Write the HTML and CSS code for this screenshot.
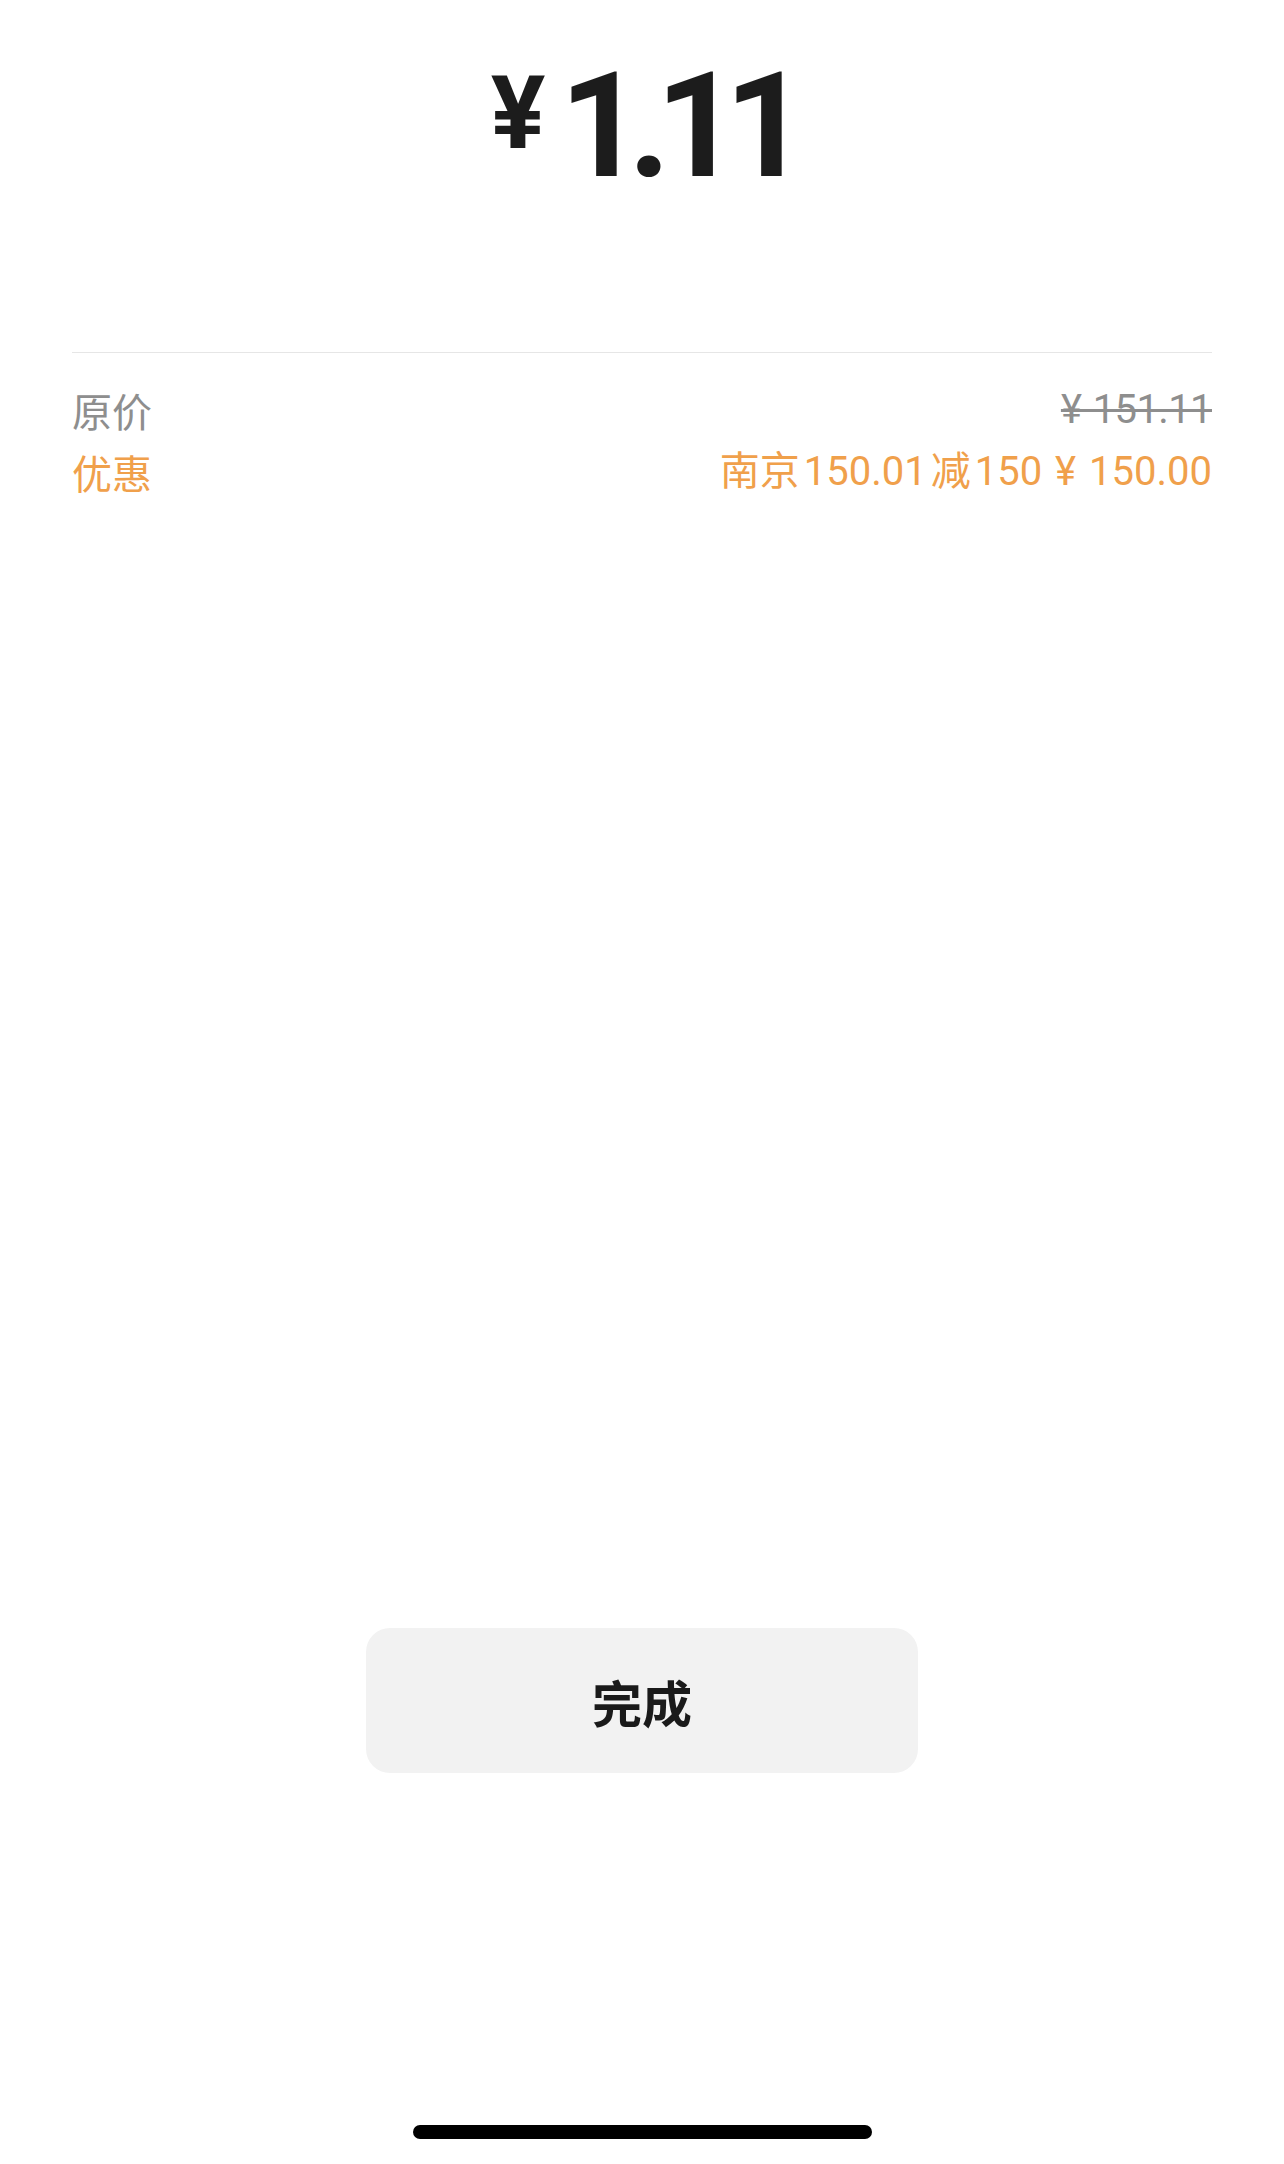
FILE: index.html
```html
<!DOCTYPE html>
<html lang="zh-CN">
<head>
    <meta charset="UTF-8">
    <meta name="viewport" content="width=device-width, initial-scale=1.0">
    <title>支付完成</title>
    <link rel="stylesheet" href="styles.css">
</head>
<body>
    <div class="page">
        <div class="amount">
            <span class="amount-cur">¥</span>
            <span class="amount-num">1.11</span>
        </div>

        <div class="divider"></div>

        <div class="rows">
            <div class="row">
                <span class="label">原价</span>
                <span class="value strike">¥ 151.11</span>
            </div>
            <div class="row promo">
                <span class="label">优惠</span>
                <span class="value">南京<span class="gap">150.01</span>减<span class="gap-l">150</span> ¥ 150.00</span>
            </div>
        </div>

        <button class="done-btn">完成</button>

        <div class="home-bar"></div>
    </div>
</body>
</html>
```

FILE: styles.css
```css
body {
    margin: 0;
    background: #ffffff;
    font-family: Roboto, "Noto Sans CJK SC", sans-serif;
    color: #1c1c1c;
}
.page {
    min-height: 100vh;
    display: flex;
    flex-direction: column;
    padding: 0 72px;
    box-sizing: border-box;
}
.amount {
    display: flex;
    justify-content: center;
    align-items: flex-start;
    padding-top: 54px;
    color: #1c1c1c;
    font-weight: 700;
}
.amount-cur {
    font-size: 102px;
    line-height: 102px;
    margin-top: 8px;
    margin-right: 14px;
}
.amount-num {
    font-size: 146px;
    line-height: 146px;
    letter-spacing: -15px;
}
.divider {
    height: 1px;
    background: #e6e6e6;
    margin-top: 152px;
}
.rows {
    margin-top: 26px;
}
.row {
    display: flex;
    justify-content: space-between;
    font-size: 40px;
    line-height: 62px;
    color: #8e8e8e;
}
.label {
    font-family: "Noto Sans CJK SC", sans-serif;
}
.value {
    word-spacing: 3px;
}
.value .gap {
    margin: 0 4px;
}
.value .gap-l {
    margin-left: 4px;
}
.strike {
    word-spacing: 2px;
    letter-spacing: -0.6px;
    text-decoration: line-through;
    text-decoration-thickness: 3px;
}
.promo {
    color: #f0a04b;
}
.done-btn {
    margin: auto auto 0;
    width: 552px;
    height: 145px;
    border: none;
    border-radius: 24px;
    background: #f2f2f2;
    font-family: "Noto Sans CJK SC", sans-serif;
    font-size: 50px;
    font-weight: 700;
    color: #1a1a1a;
    cursor: pointer;
}
.home-bar {
    width: 459px;
    height: 14px;
    border-radius: 7px;
    background: #000000;
    margin: 352px auto 25px;
}
```
